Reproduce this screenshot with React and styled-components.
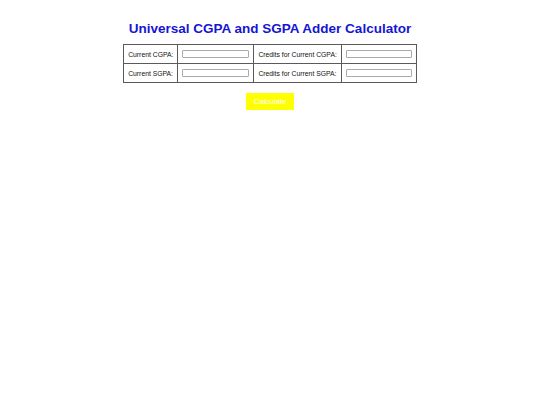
import React from 'react'
import styled, { createGlobalStyle } from 'styled-components'

const GlobalStyle = createGlobalStyle`
  html, body {
    margin: 0;
    padding: 0;
    background: #fff;
    font-family: "Liberation Sans", Arial, sans-serif;
  }
`

const Page = styled.div`
  display: flex;
  flex-direction: column;
  align-items: center;
  padding-top: 21px;
`

const Title = styled.h1`
  margin: 0 0 7px;
  font-size: 13.5px;
  line-height: 16px;
  font-weight: bold;
  color: #1616d2;
`

const Table = styled.table`
  border-collapse: collapse;
  border: 1px solid #555;
`

const Label = styled.td`
  border: 1px solid #5a5a5a;
  padding: 0 4px;
  height: 19px;
  font-size: 6.8px;
  color: #111;
  white-space: nowrap;
  width: ${p => p.$w}px;
  box-sizing: border-box;
`

const InputCell = styled.td`
  border: 1px solid #5a5a5a;
  padding: 0 4px;
  height: 19px;
  width: ${p => p.$w}px;
  box-sizing: border-box;
`

const Field = styled.input`
  display: block;
  width: 100%;
  height: 8px;
  box-sizing: border-box;
  border: 1px solid #aaa;
  border-radius: 1px;
  padding: 0;
  margin: 0;
  background: #fff;
`

const Button = styled.button`
  margin-top: 10px;
  width: 48px;
  height: 17px;
  border: none;
  background: #ffff00;
  color: #fff;
  font-family: "Liberation Sans", Arial, sans-serif;
  font-size: 7.8px;
  font-weight: normal;
  padding: 0;
  cursor: pointer;
`

export default function App() {
  return (
    <>
      <GlobalStyle />
      <Page>
        <Title>Universal CGPA and SGPA Adder Calculator</Title>
        <Table>
          <tbody>
            <tr>
              <Label $w={54}>Current CGPA:</Label>
              <InputCell $w={76}><Field type="text" /></InputCell>
              <Label $w={87}>Credits for Current CGPA:</Label>
              <InputCell $w={75}><Field type="text" /></InputCell>
            </tr>
            <tr>
              <Label $w={54}>Current SGPA:</Label>
              <InputCell $w={76}><Field type="text" /></InputCell>
              <Label $w={87}>Credits for Current SGPA:</Label>
              <InputCell $w={75}><Field type="text" /></InputCell>
            </tr>
          </tbody>
        </Table>
        <Button>Calculate</Button>
      </Page>
    </>
  )
}
